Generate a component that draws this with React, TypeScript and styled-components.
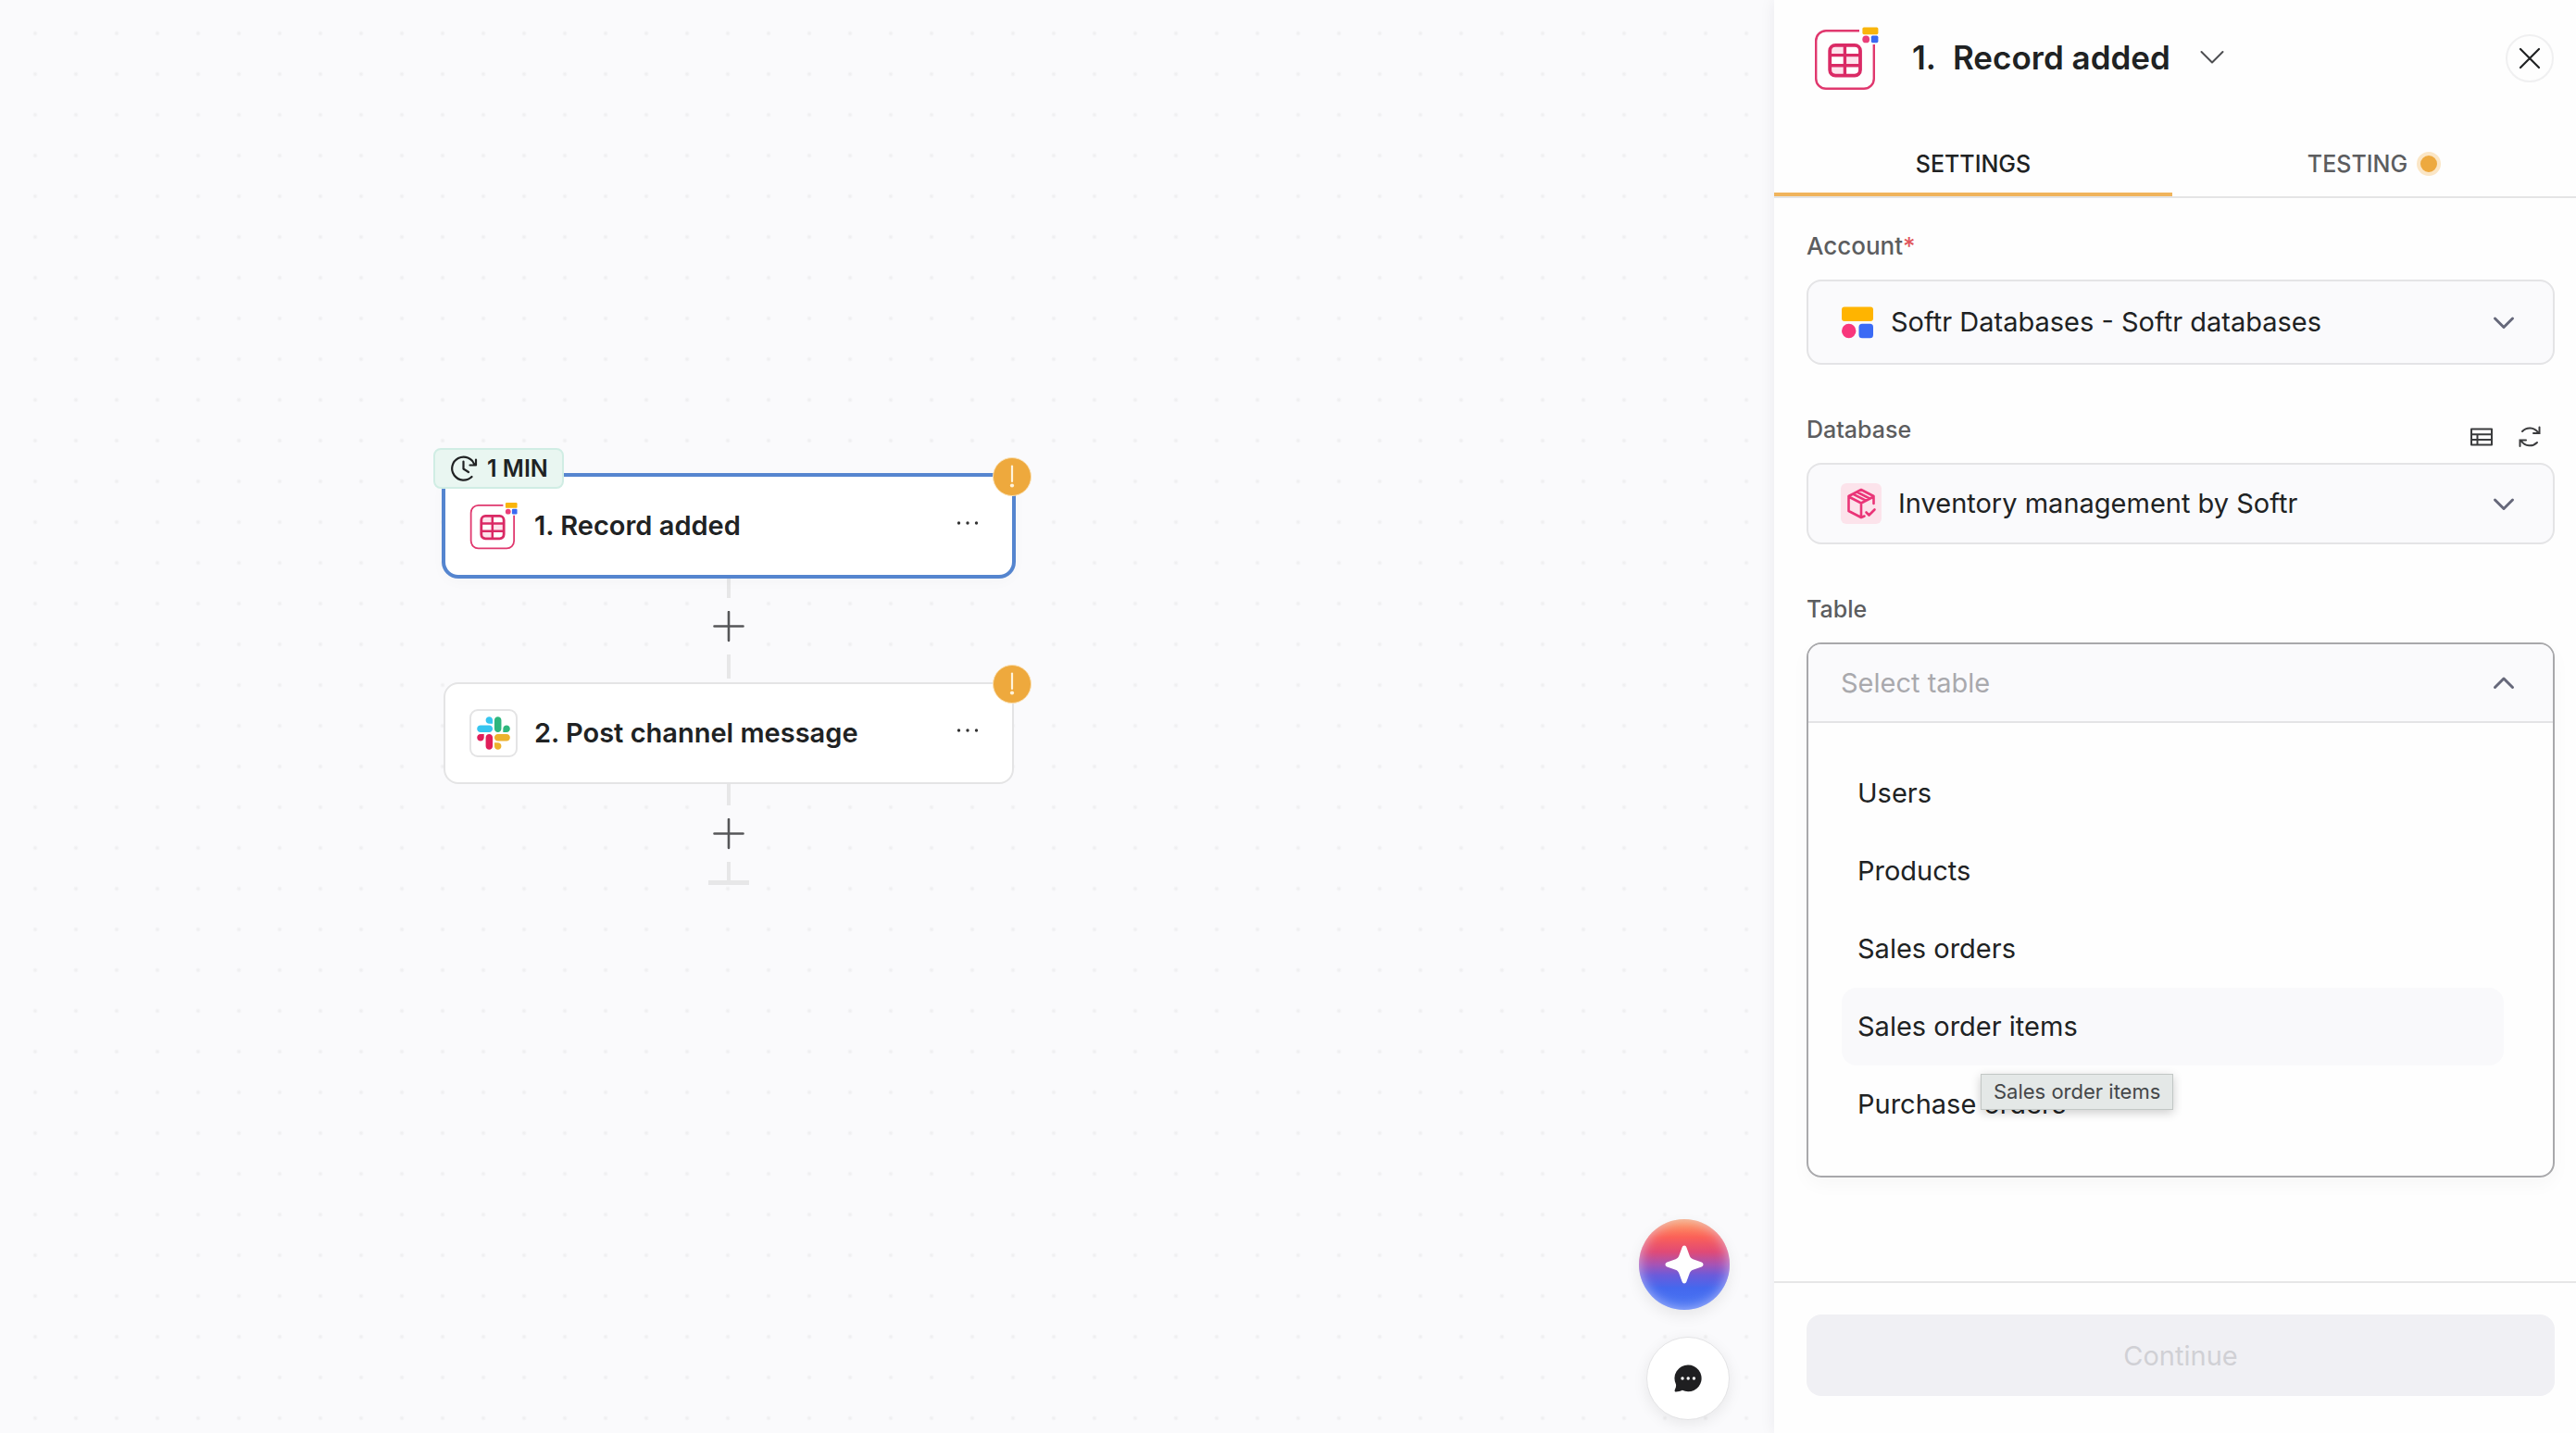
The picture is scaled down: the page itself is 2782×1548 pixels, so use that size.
import React from 'react';
import styled, { createGlobalStyle, css } from 'styled-components';

const font = 'Inter, "Liberation Sans", sans-serif';

const GlobalStyle = createGlobalStyle`
  *, *::before, *::after { box-sizing: border-box; }
  body { margin: 0; background: #fafafc; color: #202223; font-family: ${font}; }
  button, select { font-family: inherit; margin: 0; }
  button { padding: 0; border: 0; background: none; color: inherit; cursor: pointer; }
  svg { display: block; flex: none; }
`;

const Page = styled.div`
  display: flex;
  min-height: 100vh;
`;

/* ---------- Canvas ---------- */

const Canvas = styled.main`
  position: relative;
  flex: 1;
  min-width: 0;
  background: radial-gradient(circle at center, #eeeef0 0, #f0f0f2 1px, transparent 3px) 16px 14px / 44px 44px #fafafc;
`;

const Flow = styled.div`
  position: absolute;
  left: 479px;
  top: 513px;
  width: 616px;
  display: flex;
  flex-direction: column;
`;

const Node = styled.article<{ $selected?: boolean }>`
  position: relative;
  display: flex;
  align-items: center;
  gap: 18px;
  height: 110px;
  padding: 0 34px 0 26px;
  border: 2px solid #e4e4e5;
  border-radius: 16px;
  background: #fff;
  ${(p) =>
    p.$selected &&
    css`
      border-color: #5585cf;
      box-shadow: 0 0 0 2px #5585cf, 0 4px 16px rgba(0, 0, 0, 0.03);
    `}
`;

const NodeTitle = styled.h3`
  flex: 1;
  margin: 0;
  font-size: 29px;
  line-height: 36px;
  font-weight: 600;
`;

const AppTile = styled.span`
  display: grid;
  place-items: center;
  width: 52px;
  height: 52px;
  border: 2px solid #e4e4e5;
  border-radius: 9px;
`;

const Schedule = styled.span`
  position: absolute;
  left: -13px;
  top: -31px;
  display: flex;
  align-items: center;
  gap: 9px;
  height: 44px;
  padding: 0 15px;
  border: 2px solid #d0ede4;
  border-radius: 8px;
  background: #e9f6f1;
  font-size: 25px;
  line-height: 32px;
  font-weight: 600;
`;

const Alert = styled.span`
  position: absolute;
  right: -21px;
  top: -21px;
  display: grid;
  place-items: center;
  width: 42px;
  height: 42px;
  border: 1px solid #fbe0b2;
  border-radius: 50%;
  background: #eea93d;
`;

const Connector = styled.div`
  display: flex;
  flex-direction: column;
  align-items: center;
`;

const Line = styled.span<{ $height: number; $gap?: number }>`
  width: 4px;
  height: ${(p) => p.$height}px;
  margin-bottom: ${(p) => p.$gap ?? 0}px;
  background: #e7e7e8;
`;

const AddButton = styled.button`
  display: grid;
  place-items: center;
  width: 60px;
  height: 61px;
  background: #fafafc;
  color: #555658;
`;

const EndBar = styled.span`
  width: 44px;
  height: 5px;
  background: #e7e7e8;
`;

const Floating = styled.div`
  position: absolute;
  right: 48px;
  bottom: 14px;
  display: flex;
  flex-direction: column;
  align-items: flex-end;
  gap: 29px;
`;

const AiButton = styled.button`
  display: grid;
  place-items: center;
  width: 98px;
  height: 98px;
  border-radius: 50%;
  background: linear-gradient(#ffa363 0%, #fb6058 20%, #e04a76 36%, #a753b4 50%, #6a5bdb 62%, #4468ee 76%, #4a78f4 100%);
  box-shadow: inset 0 0 14px rgba(225, 220, 255, 0.7), 0 6px 16px rgba(0, 0, 0, 0.08);
`;

const ChatButton = styled.button`
  display: grid;
  place-items: center;
  width: 90px;
  height: 90px;
  border: 1px solid #e4e4e6;
  border-radius: 50%;
  background: #fff;
  box-shadow: 0 4px 16px rgba(0, 0, 0, 0.08);
`;

/* ---------- Side panel ---------- */

const Panel = styled.aside`
  position: relative;
  display: flex;
  flex-direction: column;
  flex: 0 0 866px;
  background: #fefefe;
  box-shadow: 0 0 16px rgba(30, 30, 60, 0.07);
`;

const Header = styled.header`
  display: flex;
  align-items: center;
  height: 126px;
  padding: 0 24px 0 43px;
`;

const Title = styled.h2`
  display: flex;
  gap: 18px;
  margin: 0 0 2px 36px;
  font-size: 35px;
  line-height: 44px;
  font-weight: 600;
`;

const TitleToggle = styled.button`
  margin-left: 29px;
  color: #4c4d50;
`;

const CloseButton = styled.button`
  display: grid;
  place-items: center;
  width: 52px;
  height: 52px;
  margin-left: auto;
  border: 2px solid #f0f0f1;
  border-radius: 50%;
`;

const Tabs = styled.div`
  display: grid;
  grid-template-columns: 430fr 436fr;
  border-bottom: 2px solid #e4e4e5;
`;

const Tab = styled.button<{ $active?: boolean }>`
  display: flex;
  align-items: center;
  justify-content: center;
  gap: 10px;
  height: 86px;
  padding-top: 20px;
  border-bottom: 4px solid ${(p) => (p.$active ? '#f0b45c' : 'transparent')};
  color: ${(p) => (p.$active ? '#202223' : '#5c5d5f')};
  font-size: 25px;
  font-weight: 500;
`;

const Dot = styled.span`
  width: 26px;
  height: 26px;
  border: 4px solid #fbe6c6;
  border-radius: 50%;
  background: #eda93f;
`;

const Body = styled.form`
  display: flex;
  flex-direction: column;
  gap: 54px;
  flex: 1;
  padding: 36px 23px 40px 35px;
`;

const FieldGroup = styled.div``;

const LabelRow = styled.div`
  display: flex;
  justify-content: space-between;
  height: 42px;
  margin-bottom: 10px;
`;

const Label = styled.label<{ $large?: boolean }>`
  color: #5c5d5f;
  font-size: ${(p) => (p.$large ? 26 : 25)}px;
  line-height: 32px;
  font-weight: 500;
`;

const Required = styled.span`
  color: #e0555b;
`;

const Actions = styled.div`
  display: flex;
  align-items: flex-end;
  gap: 16px;
  padding-right: 9px;
`;

const IconButton = styled.button`
  display: grid;
  place-items: center;
  width: 36px;
  height: 36px;
  color: #3a3b3d;
`;

const Field = styled.div<{ $tall?: boolean }>`
  display: flex;
  align-items: center;
  gap: 18px;
  height: ${(p) => (p.$tall ? 92 : 88)}px;
  padding: 0 37px 0 35px;
  border: 2px solid #e4e4e6;
  border-radius: 16px;
  background: #fafafc;
  color: #66687a;
`;

const Select = styled.select<{ $placeholder?: boolean }>`
  flex: 1;
  min-width: 0;
  height: 44px;
  padding: 0;
  border: 0;
  outline: 0;
  appearance: none;
  background: transparent;
  color: ${(p) => (p.$placeholder ? '#a9a9ad' : '#202223')};
  font-size: 29px;
  line-height: 44px;
`;

const Combo = styled.div`
  border: 2px solid #a8a8ab;
  border-radius: 16px;
  background: #fefefe;
  box-shadow: 0 8px 20px rgba(0, 0, 0, 0.03);
`;

const ComboHead = styled.div`
  display: flex;
  align-items: center;
  height: 85px;
  padding: 0 37px 0 35px;
  border-bottom: 2px solid #e4e4e6;
  border-radius: 14px 14px 0 0;
  background: #fafafc;
  color: #66687a;
`;

const List = styled.ul`
  margin: 0;
  padding: 34px 53px 35px 36px;
  list-style: none;
`;

const Option = styled.li<{ $hovered?: boolean }>`
  position: relative;
  height: 84px;
  padding: 0 17px;
  border-radius: 16px;
  background: ${(p) => (p.$hovered ? '#f9f9fb' : 'transparent')};
  z-index: ${(p) => (p.$hovered ? 1 : 0)};
  font-size: 29px;
  line-height: 84px;
`;

const Tooltip = styled.span`
  position: absolute;
  left: 150px;
  top: 93px;
  padding: 0 13px;
  border: 1px solid #c2c7c5;
  background: #e4e8e7;
  box-shadow: 0 3px 10px rgba(0, 0, 0, 0.2);
  color: #444749;
  font-size: 22px;
  line-height: 37px;
  white-space: nowrap;
`;

const Footer = styled.footer`
  padding: 34px 23px 40px 35px;
  border-top: 2px solid #e6e6e7;
`;

const Continue = styled.button`
  width: 100%;
  height: 88px;
  border-radius: 16px;
  background: #f0f0f4;
  color: #d0d0d5;
  font-size: 29px;
  cursor: default;
`;

/* ---------- Icons ---------- */

function RecordIcon({ size }: { size: number }) {
  return (
    <svg width={size} height={size} viewBox="0 0 70 70" fill="none" aria-hidden="true">
      <path d="M49 5.2H13A10.8 10.8 0 0 0 2.2 16V57A10.8 10.8 0 0 0 13 67.8H54A10.8 10.8 0 0 0 64.8 57V20" stroke="#e0386e" strokeWidth="2.4" />
      <rect x="16.5" y="20.5" width="33" height="33" rx="6" fill="#fff" />
      <path d="M18 22h15v9.5H18zM33 31.5h15v11H33zM18 42.5h15V52H18z" fill="#fde3ec" />
      <rect x="17.2" y="20.8" width="32.8" height="32.8" rx="6" stroke="#da2a65" strokeWidth="3.8" />
      <path d="M33.4 20v34M17 31.6h33M17 42.8h33" stroke="#da2a65" strokeWidth="3.4" />
      <rect x="52.4" y="1.4" width="17" height="7.8" rx="1.6" fill="#f9b50b" />
      <circle cx="56.2" cy="14.4" r="3.9" fill="#ea3f79" />
      <rect x="61.8" y="10.6" width="7.6" height="7.6" rx="1.6" fill="#3a6af2" />
    </svg>
  );
}

function SlackIcon() {
  return (
    <svg width="36" height="36" viewBox="0 0 127 127" aria-hidden="true">
      <path fill="#E01E5A" d="M27.2 80c0 7.3-5.9 13.2-13.2 13.2S.8 87.3.8 80s5.9-13.2 13.2-13.2h13.2V80zM33.8 80c0-7.3 5.9-13.2 13.2-13.2s13.2 5.9 13.2 13.2v33c0 7.3-5.9 13.2-13.2 13.2s-13.2-5.9-13.2-13.2V80z" />
      <path fill="#36C5F0" d="M47 27c-7.3 0-13.2-5.9-13.2-13.2S39.7.6 47 .6s13.2 5.9 13.2 13.2V27H47zM47 33.7c7.3 0 13.2 5.9 13.2 13.2S54.3 60.1 47 60.1H13.9C6.6 60.1.7 54.2.7 46.9s5.9-13.2 13.2-13.2H47z" />
      <path fill="#2EB67D" d="M99.9 46.9c0-7.3 5.9-13.2 13.2-13.2s13.2 5.9 13.2 13.2-5.9 13.2-13.2 13.2H99.9V46.9zM93.3 46.9c0 7.3-5.9 13.2-13.2 13.2s-13.2-5.9-13.2-13.2V13.8C66.9 6.5 72.8.6 80.1.6s13.2 5.9 13.2 13.2v33.1z" />
      <path fill="#ECB22E" d="M80.1 99.8c7.3 0 13.2 5.9 13.2 13.2s-5.9 13.2-13.2 13.2-13.2-5.9-13.2-13.2V99.8h13.2zM80.1 93.2c-7.3 0-13.2-5.9-13.2-13.2s5.9-13.2 13.2-13.2h33.1c7.3 0 13.2 5.9 13.2 13.2s-5.9 13.2-13.2 13.2H80.1z" />
    </svg>
  );
}

function SoftrIcon() {
  return (
    <svg width="36" height="36" viewBox="0 0 36 36" aria-hidden="true">
      <rect x="1" y="1.5" width="34" height="15.5" rx="3" fill="#ffb400" />
      <circle cx="8.7" cy="27.5" r="7.7" fill="#f8367c" />
      <rect x="19.5" y="19.8" width="15.5" height="15.5" rx="3.5" fill="#3a6af5" />
    </svg>
  );
}

function PackageIcon() {
  return (
    <svg width="44" height="44" viewBox="0 0 44 44" fill="none" stroke="#ea3578" strokeWidth="2.6" strokeLinecap="round" strokeLinejoin="round" aria-hidden="true">
      <rect width="44" height="44" rx="6" fill="#fce3eb" stroke="none" />
      <path d="M35.5 22V14L22 7 8.5 14V30L22 37M8.5 14.5 22 21.5 35.5 14.5M22 21.5V37L25.5 35.5M13.5 11.8 27 18.6M17.5 9.5 31 16.4M27.5 31.5 30.5 34.5 36.5 28.5" />
    </svg>
  );
}

function Chevron({ up, thin }: { up?: boolean; thin?: boolean }) {
  return (
    <svg width="32" height="32" viewBox="0 0 32 32" fill="none" stroke="currentColor" strokeWidth={thin ? 2 : 3} strokeLinecap="round" strokeLinejoin="round" aria-hidden="true">
      <path d={up ? 'M6.5 20.5 16 11 25.5 20.5' : thin ? 'M4.5 9 16 20.5 27.5 9' : 'M6.5 12 16 21.5 25.5 12'} />
    </svg>
  );
}

function ScheduleIcon() {
  return (
    <svg width="32" height="32" viewBox="0 0 32 32" fill="none" stroke="currentColor" strokeWidth="2.2" strokeLinecap="round" strokeLinejoin="round" aria-hidden="true">
      <path d="M27.5 12A12.5 12.5 0 1 0 24.5 25M29 6.5V12.5H22.5M15.5 8.5V16.5L21 20" />
    </svg>
  );
}

function AlertIcon() {
  return (
    <svg width="24" height="26" viewBox="0 0 24 26" aria-hidden="true">
      <path d="M12 1.5V18" stroke="#fff3dc" strokeWidth="2.2" strokeLinecap="round" />
      <circle cx="12" cy="22.5" r="2.1" fill="#fff3dc" />
    </svg>
  );
}

function PlusIcon() {
  return (
    <svg width="34" height="34" viewBox="0 0 34 34" stroke="currentColor" strokeWidth="2.6" strokeLinecap="round" aria-hidden="true">
      <path d="M17 1v31M1.5 16.500h31" />
    </svg>
  );
}

function MoreIcon() {
  return (
    <svg width="28" height="32" viewBox="0 0 28 32" fill="#333" aria-hidden="true">
      <circle cx="4.5" cy="13" r="1.7" />
      <circle cx="14" cy="13" r="1.7" />
      <circle cx="23.5" cy="13" r="1.7" />
    </svg>
  );
}

function TableIcon() {
  return (
    <svg width="28" height="28" viewBox="0 0 28 28" fill="none" stroke="currentColor" strokeWidth="2" strokeLinejoin="round" aria-hidden="true">
      <path d="M3 5.500h22v17H3zM3 11.200h22M3 16.900h22M9.500 11.200v11.300" />
    </svg>
  );
}

function RefreshIcon() {
  return (
    <svg width="28" height="28" viewBox="0 0 28 28" fill="none" stroke="currentColor" strokeWidth="2" strokeLinecap="round" aria-hidden="true">
      <path d="M6 8A11 11 0 0 1 23 9M24.500 3.500V10H18M22 20A11 11 0 0 1 5 18.500M3.500 24V17.500H10" />
    </svg>
  );
}

function CloseIcon() {
  return (
    <svg width="26" height="26" viewBox="0 0 26 26" stroke="#202223" strokeWidth="2.2" strokeLinecap="round" aria-hidden="true">
      <path d="M3 3l20 20M23 3L3 23" />
    </svg>
  );
}

function SparkIcon() {
  return (
    <svg width="42" height="42" viewBox="0 0 42 42" fill="#fff" aria-hidden="true">
      <path d="M21 .5c1.200 0 2 .8 2.400 1.900l3.300 9.200c.7 1.900 1.800 3 3.700 3.700l9.200 3.300c2.500.9 2.500 3.900 0 4.800l-9.200 3.300c-1.900.7-3 1.800-3.700 3.700l-3.300 9.200c-.8 2.500-4 2.500-4.800 0l-3.300-9.200c-.7-1.900-1.800-3-3.700-3.700l-9.200-3.300c-2.500-.9-2.500-3.900 0-4.800l9.200-3.300c1.900-.7 3-1.800 3.700-3.700l3.300-9.200C19 1.300 19.800.5 21 .5z" />
    </svg>
  );
}

function ChatIcon() {
  return (
    <svg width="30" height="30" viewBox="0 0 30 30" aria-hidden="true">
      <path d="M15.200.5a14.400 14.400 0 1 1-6.400 27.300c-2 .9-4.500 1.700-6.800 1.700-1.600 0-1.700-1.500-1-2.700.9-1.700 1.300-3.600 1-5.400A14.400 14.400 0 0 1 15.200.5z" fill="#1f1f21" />
      <g fill="#fff">
        <circle cx="9" cy="15" r="1.7" />
        <circle cx="15.2" cy="15" r="1.7" />
        <circle cx="21.4" cy="15" r="1.7" />
      </g>
    </svg>
  );
}

/* ---------- App ---------- */

const tables = ['Users', 'Products', 'Sales orders', 'Sales order items', 'Purchase orders'];
const hoveredTable = 'Sales order items';

export default function App() {
  return (
    <>
      <GlobalStyle />
      <Page>
        <Canvas>
          <Flow>
            <Node $selected>
              <RecordIcon size={52} />
              <NodeTitle>1. Record added</NodeTitle>
              <button type="button" aria-label="Trigger options"><MoreIcon /></button>
              <Schedule><ScheduleIcon />1 MIN</Schedule>
              <Alert><AlertIcon /></Alert>
            </Node>
            <Connector>
              <Line $height={23} />
              <AddButton type="button" aria-label="Add step"><PlusIcon /></AddButton>
              <Line $height={26} $gap={4} />
            </Connector>
            <Node>
              <AppTile><SlackIcon /></AppTile>
              <NodeTitle>2. Post channel message</NodeTitle>
              <button type="button" aria-label="Action options"><MoreIcon /></button>
              <Alert><AlertIcon /></Alert>
            </Node>
            <Connector>
              <Line $height={23} />
              <AddButton type="button" aria-label="Add step"><PlusIcon /></AddButton>
              <Line $height={20} />
              <EndBar />
            </Connector>
          </Flow>
          <Floating>
            <AiButton type="button" aria-label="Ask AI"><SparkIcon /></AiButton>
            <ChatButton type="button" aria-label="Open chat"><ChatIcon /></ChatButton>
          </Floating>
        </Canvas>

        <Panel>
          <Header>
            <RecordIcon size={70} />
            <Title><span>1.</span><span>Record added</span></Title>
            <TitleToggle type="button" aria-label="Change trigger"><Chevron thin /></TitleToggle>
            <CloseButton type="button" aria-label="Close"><CloseIcon /></CloseButton>
          </Header>
          <Tabs role="tablist">
            <Tab type="button" role="tab" aria-selected="true" $active>SETTINGS</Tab>
            <Tab type="button" role="tab" aria-selected="false">TESTING<Dot /></Tab>
          </Tabs>
          <Body>
            <FieldGroup>
              <LabelRow>
                <Label htmlFor="account" $large>Account<Required>*</Required></Label>
              </LabelRow>
              <Field $tall>
                <SoftrIcon />
                <Select id="account" defaultValue="softr">
                  <option value="softr">Softr Databases - Softr databases</option>
                </Select>
                <Chevron />
              </Field>
            </FieldGroup>
            <FieldGroup>
              <LabelRow>
                <Label htmlFor="database">Database</Label>
                <Actions>
                  <IconButton type="button" aria-label="Open table"><TableIcon /></IconButton>
                  <IconButton type="button" aria-label="Refresh"><RefreshIcon /></IconButton>
                </Actions>
              </LabelRow>
              <Field>
                <PackageIcon />
                <Select id="database" defaultValue="inventory">
                  <option value="inventory">Inventory management by Softr</option>
                </Select>
                <Chevron />
              </Field>
            </FieldGroup>
            <FieldGroup>
              <LabelRow>
                <Label htmlFor="table">Table</Label>
              </LabelRow>
              <Combo>
                <ComboHead>
                  <Select id="table" defaultValue="" $placeholder>
                    <option value="">Select table</option>
                  </Select>
                  <Chevron up />
                </ComboHead>
                <List role="listbox" aria-label="Table">
                  {tables.map((name) => (
                    <Option key={name} role="option" aria-selected={false} $hovered={name === hoveredTable}>
                      {name}
                      {name === hoveredTable && <Tooltip role="tooltip">{name}</Tooltip>}
                    </Option>
                  ))}
                </List>
              </Combo>
            </FieldGroup>
          </Body>
          <Footer>
            <Continue type="button" disabled>Continue</Continue>
          </Footer>
        </Panel>
      </Page>
    </>
  );
}
